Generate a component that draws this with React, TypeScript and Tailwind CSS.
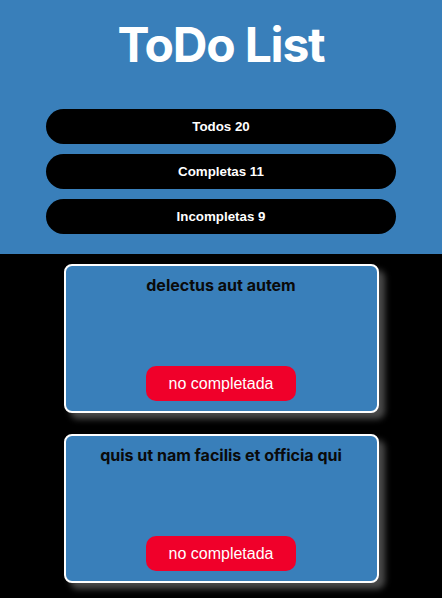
const todos = [
  { id: 1, title: 'delectus aut autem', completed: false },
  { id: 2, title: 'quis ut nam facilis et officia qui', completed: false },
]

export default function App() {
  return (
    <div className="min-h-screen bg-black font-['Inter',sans-serif]">
      {/* Header */}
      <header className="bg-[#397fba] px-[46px] pt-[15px] pb-[20px]">
        <h1 className="text-center text-[48px] leading-[60px] font-bold tracking-tight text-white">ToDo List</h1>
        <div className="mt-[34px] flex flex-col gap-[10px] font-['Liberation_Sans',Arial,sans-serif]">
          <button className="h-[35px] rounded-full bg-black text-[13.333px] font-bold text-white">Todos 20</button>
          <button className="h-[35px] rounded-full bg-black text-[13.333px] font-bold text-white">Completas 11</button>
          <button className="h-[35px] rounded-full bg-black text-[13.333px] font-bold text-white">Incompletas 9</button>
        </div>
      </header>

      {/* List */}
      <div className="flex flex-col items-center gap-[21px] pt-[10px] pb-3">
        {todos.map((todo) => (
          <div
            key={todo.id}
            className="flex h-[149px] w-[315px] flex-col items-center justify-between rounded-lg border-2 border-white bg-[#397fba] pt-[7px] pb-[10px] shadow-[6px_6px_6px_#4a4a4a]"
          >
            <h3 className="text-center text-base font-bold text-[#0a0a0a]">{todo.title}</h3>
            <button className="h-[35px] w-[150px] rounded-[10px] bg-[#f0002a] font-['Liberation_Sans',Arial,sans-serif] text-base text-white">
              {todo.completed ? 'completada' : 'no completada'}
            </button>
          </div>
        ))}
      </div>
    </div>
  )
}
